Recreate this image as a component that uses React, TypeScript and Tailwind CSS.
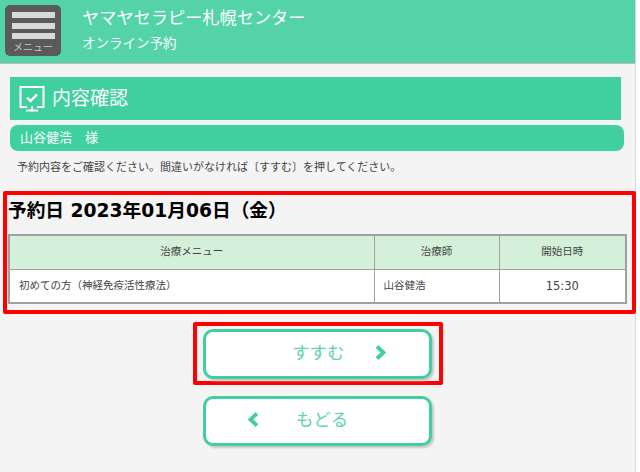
import React from 'react';

const font = { fontFamily: '"Noto Sans CJK JP", "Open Sans", sans-serif' };
const latinFont = { fontFamily: '"DejaVu Sans", "Noto Sans CJK JP", sans-serif' };

function MenuButton() {
    return (
        <div className="flex h-[51px] w-[56px] flex-col items-center rounded-[5px] bg-[#5a5a5a] pt-[7px]">
            <div className="flex flex-col gap-[4.5px]">
                <div className="h-[6px] w-[43px] bg-[#d9d9d9]" />
                <div className="h-[6px] w-[43px] bg-[#d9d9d9]" />
                <div className="h-[6px] w-[43px] bg-[#d9d9d9]" />
            </div>
            <span className="mt-[1px] text-[10px] leading-[13px] text-[#c8c8c8]">メニュー</span>
        </div>
    );
}

function CheckMonitor() {
    return (
        <svg width="28" height="28" viewBox="0 0 28 28" fill="none" stroke="white" strokeWidth="2">
            <path d="M9 22H2.5V2H25.5V22H19" />
            <path d="M9 12.5L12.5 16L19 9.5" strokeWidth="2.4" />
            <path d="M8 25.5H20" />
            <path d="M14 21V25" />
        </svg>
    );
}

function Chevron({ dir }: { dir: 'left' | 'right' }) {
    return (
        <svg width="11" height="15" viewBox="0 0 11 15" fill="none" stroke="#40cf9f" strokeWidth="3.8">
            <path d={dir === 'right' ? 'M2 1.5L8.5 7.5L2 13.5' : 'M9 1.5L2.5 7.5L9 13.5'} />
        </svg>
    );
}

function NavButton({ children }: { children: React.ReactNode }) {
    return (
        <div className="flex h-[50px] w-[229px] items-center rounded-[10px] border-[3px] border-[#40cf9f] bg-white pb-[3px] text-[17.5px] text-[#5fd3ab] shadow-[2px_2px_2px_#c8c8c8]">
            {children}
        </div>
    );
}

export default function App() {
    return (
        <div className="h-[472px] w-[640px] overflow-hidden bg-white" style={font}>
            <div className="h-full w-[636px] border-r border-[#d8d8d8] bg-[#f4f4f4]">
                <header className="flex h-[64px] items-start border-b-[1px] border-[#bdbdbd] bg-[#54d3a8] pl-[5px] pt-[5px]">
                    <MenuButton />
                    <div className="-mt-[2px] ml-[21px] text-white">
                        <div className="text-[17.2px] leading-[28px]">ヤマヤセラピー札幌センター</div>
                        <div className="mt-[1px] text-[13.5px] leading-[20px]">オンライン予約</div>
                    </div>
                </header>

                <div className="ml-[10px] mt-[13px] flex h-[43px] w-[611px] items-center gap-[6px] bg-[#40cf9f] pl-[8px] text-white">
                    <CheckMonitor />
                    <span className="-mt-[3px] text-[19px]">内容確認</span>
                </div>
                <div className="ml-[10px] mt-[5px] flex h-[26px] w-[614px] items-center rounded-[8px] bg-[#40cf9f] pb-[2px] pl-[10px] text-[13px] text-white">
                    山谷健浩　様
                </div>
                <p className="ml-[17px] mt-[6px] text-[11px] leading-[18px] text-[#444]">
                    予約内容をご確認ください。間違いがなければ〔すすむ〕を押してください。
                </p>

                <section className="ml-[3px] mt-[16px] h-[123px] w-[633px] rounded-[2px] border-[4px] border-[#ff0000] pl-[1px] pt-[1px]">
                    <h2 className="text-[18.7px] font-bold leading-[30px] text-black" style={latinFont}>予約日 2023年01月06日（金）</h2>
                    <table className="mt-[8px] w-[617px] table-fixed border-collapse border-2 border-[#a0a0a0] text-[10.5px] text-[#444]">
                        <colgroup>
                            <col className="w-[365px]" />
                            <col className="w-[125px]" />
                            <col className="w-[127px]" />
                        </colgroup>
                        <thead>
                            <tr className="h-[34px] bg-[#d4f0da]">
                                <th className="border border-[#a0a0a0] pb-[2px] font-normal">治療メニュー</th>
                                <th className="border border-[#a0a0a0] pb-[2px] font-normal">治療師</th>
                                <th className="border border-[#a0a0a0] pb-[2px] font-normal">開始日時</th>
                            </tr>
                        </thead>
                        <tbody>
                            <tr className="h-[34px] bg-white">
                                <td className="border border-[#a0a0a0] pb-[2px] pl-[9px]">初めての方（神経免疫活性療法）</td>
                                <td className="border border-[#a0a0a0] pb-[2px] pl-[9px]">山谷健浩</td>
                                <td className="border border-[#a0a0a0] pt-[1px] text-center text-[11.5px]" style={latinFont}>15:30</td>
                            </tr>
                        </tbody>
                    </table>
                </section>

                <div className="ml-[193px] mt-[8px] flex h-[63px] w-[250px] items-start rounded-[2px] border-[4px] border-[#ff0000] pl-[6px] pt-[3px]">
                    <NavButton>
                        <span className="ml-[86px]">すすむ</span>
                        <span className="ml-[30px] flex"><Chevron dir="right" /></span>
                    </NavButton>
                </div>
                <div className="ml-[203px] mt-[11px]">
                    <NavButton>
                        <span className="ml-[42px] flex"><Chevron dir="left" /></span>
                        <span className="ml-[37px]">もどる</span>
                    </NavButton>
                </div>
            </div>
        </div>
    );
}
